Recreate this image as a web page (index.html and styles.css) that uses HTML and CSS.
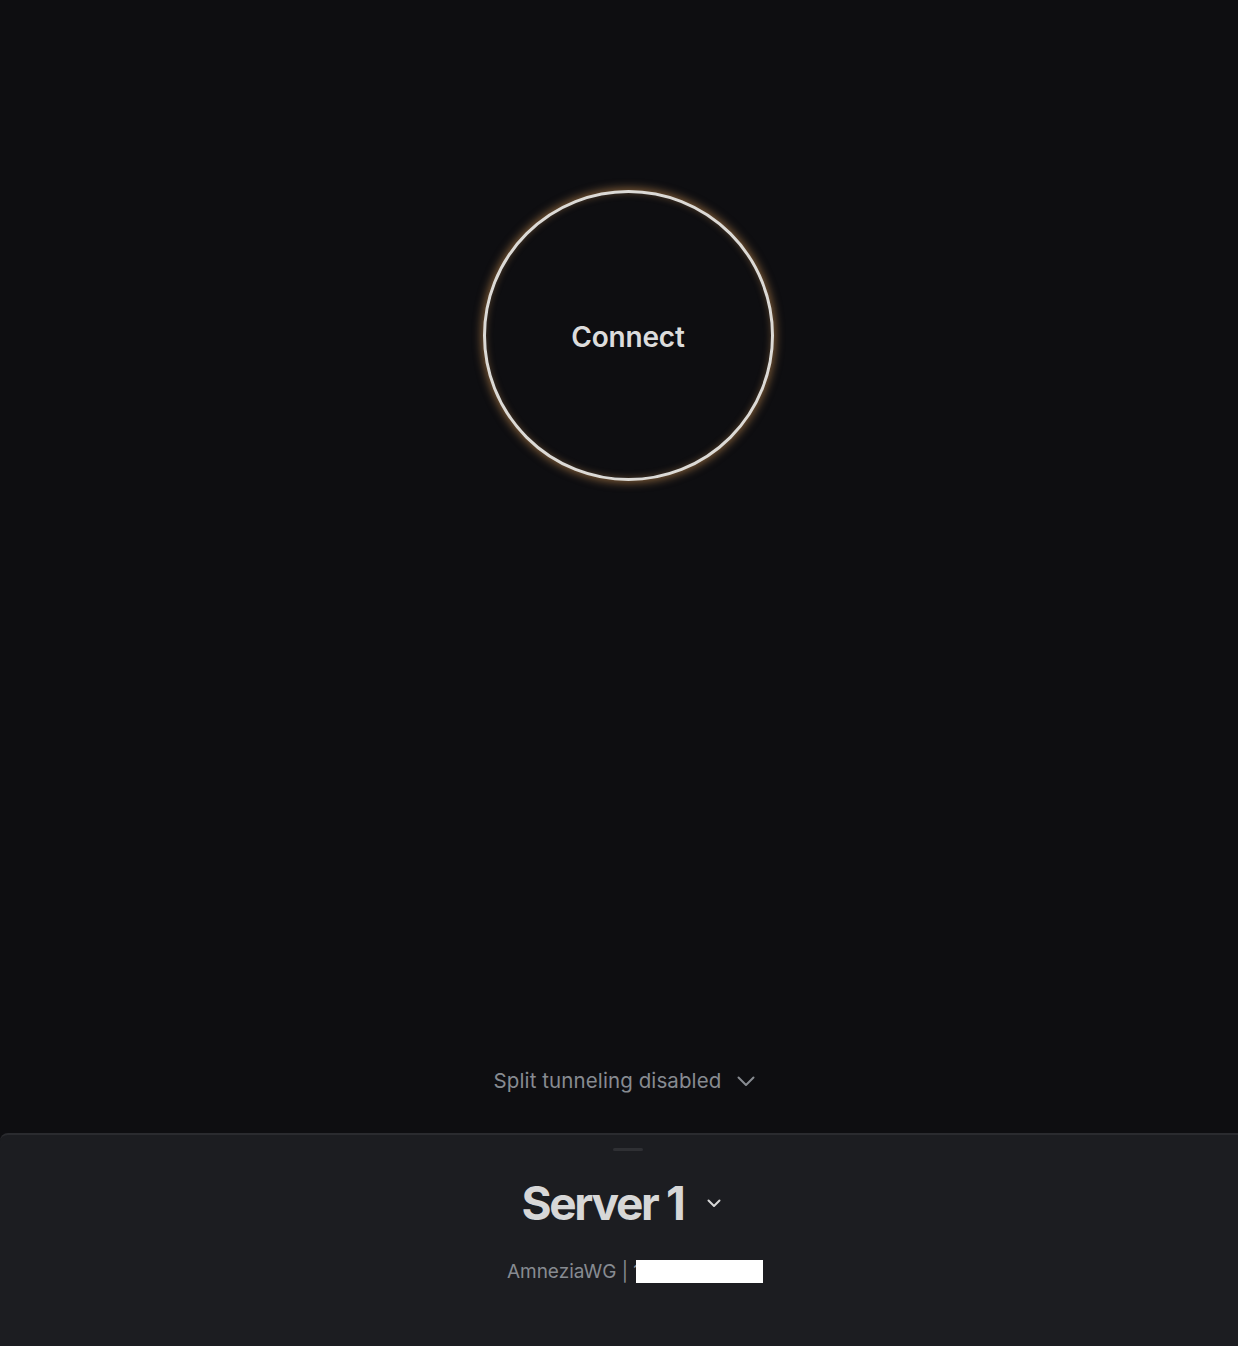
FILE: index.html
```html
<!DOCTYPE html>
<html lang="en">
<head>
  <meta charset="UTF-8" />
  <meta name="viewport" content="width=device-width, initial-scale=1.0"/>
  <title>AmneziaVPN</title>
  <link rel="stylesheet" href="styles.css">
</head>
<body>

  <!-- Main area -->
  <div class="main">
    <button class="connect">Connect</button>

    <div class="split">
      <span>Split tunneling disabled</span>
      <svg width="20" height="20" viewBox="0 0 20 20"><path d="M2.5 6.5l7.5 7.5 7.5-7.5" fill="none" stroke="#878b91" stroke-width="2" stroke-linecap="round" stroke-linejoin="round"/></svg>
    </div>
  </div>

  <!-- Drawer -->
  <div class="drawer">
    <div class="handle"></div>
    <div class="server">
      <span class="server-name">Server 1</span>
      <svg width="16" height="16" viewBox="0 0 16 16"><path d="M2.5 5.5l5.5 5.5 5.5-5.5" fill="none" stroke="#d7d7d7" stroke-width="2" stroke-linecap="round" stroke-linejoin="round"/></svg>
    </div>
    <div class="server-info">
      <span>AmneziaWG | 1</span>
      <span class="hidden-ip"></span>
    </div>
  </div>

</body>
</html>
```

FILE: styles.css
```css
* {
  box-sizing: border-box;
}

body {
  margin: 0;
  height: 1346px;
  background-color: #0e0e11;
  font-family: Inter, "Noto Sans", sans-serif;
  display: flex;
  flex-direction: column;
  overflow: hidden;
}

.main {
  flex: 1;
  display: flex;
  flex-direction: column;
  align-items: center;
  padding-top: 190px;
  padding-left: 18px;
}

.connect {
  width: 291px;
  height: 291px;
  border-radius: 50%;
  border: 3px solid #dcdad6;
  background-color: #0e0e11;
  color: #dcdcdc;
  font-family: Inter, sans-serif;
  font-size: 28px;
  font-weight: 600;
  letter-spacing: -0.2px;
  box-shadow: 0 0 9px 2px rgba(196, 140, 80, 0.6), inset 0 0 7px rgba(196, 140, 80, 0.4);
  cursor: pointer;
  padding: 2px 0 0 0;
}

.split {
  margin-top: auto;
  margin-bottom: 40px;
  display: flex;
  align-items: center;
  gap: 15px;
  color: #878b91;
  font-size: 20.5px;
  letter-spacing: 0.1px;
  padding-right: 6px;
}

.split svg {
  margin-top: 1px;
}

.drawer {
  height: 213px;
  background-color: #1c1d21;
  border-top: 2px solid #2a2b2f;
  border-radius: 8px 0 0 0;
  display: flex;
  flex-direction: column;
  align-items: center;
  padding-left: 18px;
}

.handle {
  width: 30px;
  height: 3px;
  border-radius: 2px;
  background-color: #2f3034;
  margin-top: 13px;
}

.server {
  margin-top: 24px;
  display: flex;
  align-items: center;
  gap: 22px;
  padding-right: 13px;
}

.server-name {
  color: #d7d7d7;
  font-size: 46px;
  font-weight: 700;
  letter-spacing: -2.3px;
  line-height: 56px;
}

.server-info {
  margin-top: 29px;
  display: flex;
  align-items: center;
  color: #878b91;
  font-size: 19px;
  padding-left: 14px;
}

.hidden-ip {
  width: 127px;
  height: 23px;
  background-color: #ffffff;
  margin-left: -5px;
}
```
